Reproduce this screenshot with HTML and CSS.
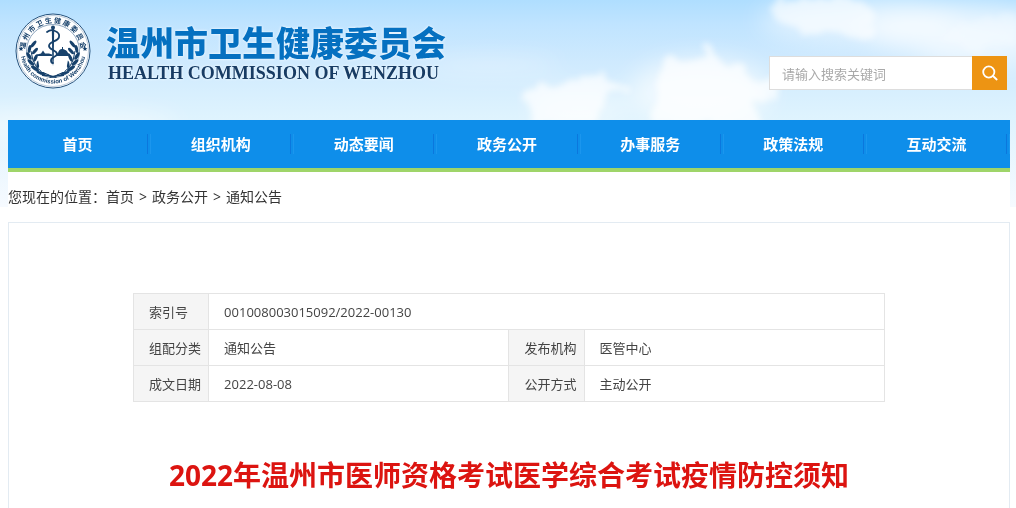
FILE: index.html
```html
<!DOCTYPE html>
<html lang="zh-CN">
<head>
  <meta charset="UTF-8">
  <meta name="viewport" content="width=device-width, initial-scale=1.0">
  <title>2022年温州市医师资格考试医学综合考试疫情防控须知</title>
  <link rel="stylesheet" href="styles.css">
</head>
<body>
  <!-- sky -->
  <svg class="sky" viewBox="0 0 1016 207" preserveAspectRatio="none" aria-hidden="true">
    <defs>
      <linearGradient id="skyFill" x1="0" y1="0" x2="0" y2="1">
        <stop offset="0" stop-color="#afdeff"/>
        <stop offset="0.12" stop-color="#c0e4ff"/>
        <stop offset="0.3" stop-color="#cfeafe"/>
        <stop offset="0.56" stop-color="#def3fe"/>
        <stop offset="1" stop-color="#f6faff"/>
      </linearGradient>
      <filter id="soft" x="-20%" y="-20%" width="140%" height="140%">
        <feTurbulence type="fractalNoise" baseFrequency="0.06" numOctaves="4" seed="4" result="n"/>
        <feDisplacementMap in="SourceGraphic" in2="n" scale="22" xChannelSelector="R" yChannelSelector="G" result="d"/>
        <feGaussianBlur in="d" stdDeviation="3"/>
      </filter>
      <filter id="haze" x="-30%" y="-50%" width="160%" height="200%">
        <feGaussianBlur stdDeviation="12"/>
      </filter>
    </defs>
    <rect width="1016" height="207" fill="url(#skyFill)"/>
    <g fill="#fff" filter="url(#haze)">
      <ellipse cx="60" cy="125" rx="120" ry="14" opacity="0.5"/>
      <ellipse cx="490" cy="66" rx="70" ry="7" opacity="0.4"/>
      <ellipse cx="580" cy="108" rx="50" ry="20" opacity="0.4"/>
      <ellipse cx="700" cy="92" rx="70" ry="34" opacity="0.6"/>
      <ellipse cx="860" cy="20" rx="100" ry="24" opacity="0.5"/>
      <ellipse cx="960" cy="30" rx="100" ry="26" opacity="0.65"/>
      <ellipse cx="980" cy="56" rx="60" ry="16" opacity="0.4"/>
    </g>
    <g fill="#fff" filter="url(#soft)">
      <path d="M526 90l12-5 14 4 15-8 18-4 14-7 8 9 18 8-16 7-8 14-8 18h-68l8-12z" opacity="0.7"/>
      <path d="M648 128l10-28 0-30 14-16 20 6 10-2 2-10 12 4 10 10 16 4 10 12 16 0 10 12-10 10-14 2 6 24z" opacity="0.7"/>
      <path d="M774 8l10-10h74l16 14-2 22-20 8-18-10-24 4-24-12z" opacity="0.6"/>
      <path d="M940 38l24-14 30-8 22-4v34l-50 6z" opacity="0.25"/>
    </g>
  </svg>

  <div class="container">
    <header class="header">
      <a class="logo" href="#">
        <svg class="emblem" viewBox="0 0 76 76" aria-hidden="true">
          <defs>
            <path id="arcTop" d="M10 38a28 28 0 0 1 56 0"/>
            <path id="arcBottom" d="M5.500 38a32.500 32.500 0 0 0 65 0"/>
            <g id="laurel" fill="#17416b">
              <path d="M34 62Q18 58 16 38" fill="none" stroke="#17416b" stroke-width="1"/>
              <ellipse cx="14.500" cy="36" rx="1.600" ry="4" transform="rotate(12 14.500 36)"/>
              <ellipse cx="18.500" cy="31" rx="1.600" ry="4.200" transform="rotate(38 18.500 31)"/>
              <ellipse cx="14" cy="43" rx="1.700" ry="4.300" transform="rotate(-32 14 43)"/>
              <ellipse cx="20" cy="38" rx="1.600" ry="4" transform="rotate(42 20 38)"/>
              <ellipse cx="16" cy="49.500" rx="1.700" ry="4.300" transform="rotate(-46 16 49.500)"/>
              <ellipse cx="20.500" cy="45" rx="1.600" ry="4" transform="rotate(25 20.500 45)"/>
              <ellipse cx="20" cy="55.500" rx="1.700" ry="4.500" transform="rotate(-58 20 55.500)"/>
              <ellipse cx="23" cy="51.500" rx="1.500" ry="4" transform="rotate(8 23 51.500)"/>
              <ellipse cx="26" cy="60" rx="1.500" ry="4.500" transform="rotate(-72 26 60)"/>
              <path d="M27 61q7 0 15 3l-1 1q-8-2-14-2z"/>
            </g>
          </defs>
          <circle cx="38" cy="38" r="37" fill="#fff" stroke="#24517c" stroke-width="1"/>
          <circle cx="38" cy="38" r="35.500" fill="none" stroke="#7c9bb8" stroke-width="0.500"/>
          <circle cx="38" cy="38" r="26.500" fill="none" stroke="#5d80a2" stroke-width="0.700"/>
          <text class="ring-cn"><textPath href="#arcTop" startOffset="50%" text-anchor="middle">温 州 市 卫 生 健 康 委 员 会</textPath></text>
          <text class="ring-en"><textPath href="#arcBottom" startOffset="50%" text-anchor="middle">Health commission of Wenzhou</textPath></text>
          <path d="M6 33.500l.7 1.600 1.700.1-1.300 1.100.4 1.700-1.500-.9-1.500.9.4-1.700-1.300-1.100 1.700-.1zM70 33.500l.7 1.600 1.700.1-1.300 1.100.4 1.700-1.500-.9-1.500.9.4-1.700-1.300-1.100 1.700-.1z" fill="#17416b"/>
          <use href="#laurel"/>
          <use href="#laurel" transform="translate(76 0) scale(-1 1)"/>
          <!-- skyline and open book -->
          <path d="M22 43v-1.500l4-1 2-3 2 3h4l3 1v1.500zM41 43v-2l2-1q1-4 4-4v-2h1v2q4 1 5 4l2 1v2z" fill="#17416b"/>
          <path d="M23 44q8-1 15 2 7-3 15-2 0 9-4 15-6-1-11 1-5-2-11-1-4-6-4-15z" fill="#fff"/>
          <!-- staff of Asclepius -->
          <path d="M36.800 14h2.400l-.5 34-.7 5-.7-5z" fill="#17416b"/>
          <circle cx="38" cy="14.500" r="2" fill="#17416b"/>
          <path d="M32 19q4-3 8-1 5 2 4 6c-1 5-10 4-10 9 0 4 8 4 8 8 0 3-6 3-6 6 0 2 1 3 2 3" fill="none" stroke="#17416b" stroke-width="1.800" stroke-linecap="round"/>
        </svg>
        <span class="logo-text">
          <span class="logo-cn">温州市卫生健康委员会</span>
          <span class="logo-en">HEALTH COMMISSION OF WENZHOU</span>
        </span>
      </a>
      <form class="search">
        <input type="text" class="search-input" placeholder="请输入搜索关键词" aria-label="请输入搜索关键词">
        <button type="button" class="search-btn" aria-label="搜索">
          <svg viewBox="0 0 16 16" width="16" height="16" fill="none" stroke="#fff" stroke-width="1.800" stroke-linecap="round"><circle cx="6.800" cy="7" r="5.600"/><path d="M11 11l3.700 3.500"/></svg>
        </button>
      </form>
    </header>

    <nav class="nav">
      <ul>
        <li><a href="#">首页</a></li>
        <li><a href="#">组织机构</a></li>
        <li><a href="#">动态要闻</a></li>
        <li><a href="#">政务公开</a></li>
        <li><a href="#">办事服务</a></li>
        <li><a href="#">政策法规</a></li>
        <li><a href="#">互动交流</a></li>
      </ul>
    </nav>

    <main class="main">
      <div class="crumb">您现在的位置：<a href="#">首页</a><span>&gt;</span><a href="#">政务公开</a><span>&gt;</span><a href="#">通知公告</a></div>

      <div class="article">
        <table class="info">
          <colgroup>
            <col class="col-name">
            <col class="col-value">
            <col class="col-name">
            <col class="col-value">
          </colgroup>
          <tr>
            <th scope="row">索引号</th>
            <td colspan="3">001008003015092/2022-00130</td>
          </tr>
          <tr>
            <th scope="row">组配分类</th>
            <td>通知公告</td>
            <th scope="row">发布机构</th>
            <td>医管中心</td>
          </tr>
          <tr>
            <th scope="row">成文日期</th>
            <td>2022-08-08</td>
            <th scope="row">公开方式</th>
            <td>主动公开</td>
          </tr>
        </table>
        <h1>2022年温州市医师资格考试医学综合考试疫情防控须知</h1>
      </div>
    </main>
  </div>
</body>
</html>
```

FILE: styles.css
```css
* {
  box-sizing: border-box;
}

body {
  margin: 0;
  background: #fff;
  color: #333;
  font-family: "Open Sans", "Noto Sans CJK SC", sans-serif;
  font-size: 14px;
}

a {
  color: inherit;
  text-decoration: none;
}

/* lies behind the header */
.sky {
  position: absolute;
  top: 0;
  left: 0;
  z-index: -1;
  width: 100%;
  height: 207px;
}

.container {
  margin: 0 6px 0 8px;
}

.header {
  display: flex;
  justify-content: space-between;
  align-items: flex-start;
  height: 120px;
  padding: 13px 3px 0 7px;
}

.logo {
  display: flex;
  gap: 15px;
}

.emblem {
  width: 76px;
  height: 76px;
}

.ring-cn {
  fill: #17416b;
  font: bold 7px "Noto Sans CJK SC", sans-serif;
}

.ring-en {
  fill: #17416b;
  font: bold 6px "Liberation Sans", sans-serif;
}

.logo-text {
  display: flex;
  flex-direction: column;
  padding-top: 9px;
}

.logo-cn {
  color: #0570c0;
  font-family: "Noto Sans CJK SC", sans-serif;
  font-size: 34px;
  font-weight: 900;
  line-height: 40px;
  text-shadow: 0 0 3px #fff;
}

.logo-en {
  padding-left: 2px;
  color: #183c64;
  font-family: "Liberation Serif", serif;
  font-size: 18px;
  font-weight: bold;
  line-height: 22px;
  text-shadow: 0 0 3px #fff;
}

.search {
  display: flex;
  width: 238px;
  height: 34px;
  margin-top: 43px;
}

.search-input {
  flex: 1;
  min-width: 0;
  padding: 0 12px;
  border: 1px solid #ddd;
  border-right: 0;
  background: #fff;
  font: 13px "Noto Sans CJK SC", sans-serif;
}

.search-input::placeholder {
  color: #a9a9a9;
}

.search-btn {
  display: flex;
  align-items: center;
  justify-content: center;
  width: 35px;
  padding: 0;
  border: 0;
  background: #ed9413;
  cursor: pointer;
}

.nav {
  background: #0e8eea;
  border-bottom: 4px solid #9fd569;
}

.nav ul {
  display: flex;
  margin: 0;
  padding: 0;
  list-style: none;
}

.nav li {
  display: flex;
  flex: 1;
  align-items: center;
  height: 48px;
}

.nav li::after {
  content: "";
  width: 2px;
  height: 20px;
  border-left: 1px solid #0b77dd;
  border-right: 1px solid #1b96ee;
}

.nav a {
  flex: 1;
  color: #fff;
  font-size: 15px;
  font-weight: bold;
  line-height: 20px;
  text-align: center;
}

.main {
  background: #fff;
}

.crumb {
  height: 50px;
  line-height: 50px;
}

.crumb span {
  margin: 0 5px;
}

.article {
  padding: 70px 0 12px;
  border: 1px solid #e3ebf2;
  border-bottom: 0;
}

.info {
  width: calc(75% + 2px);
  margin: 0 auto;
  border-collapse: collapse;
  table-layout: fixed;
  color: #444;
  font-size: 13px;
  line-height: 20px;
}

.col-name {
  width: 10%;
}

.col-value {
  width: 40%;
}

.info th,
.info td {
  height: 36px;
  padding: 0 0 0 15px;
  border: 1px solid #e4e4e4;
  font-weight: normal;
  text-align: left;
}

.info th {
  background: #f5f5f5;
}

h1 {
  margin: 52px 0 0;
  color: #dc1410;
  font-size: 28px;
  line-height: 42px;
  text-align: center;
}
```
